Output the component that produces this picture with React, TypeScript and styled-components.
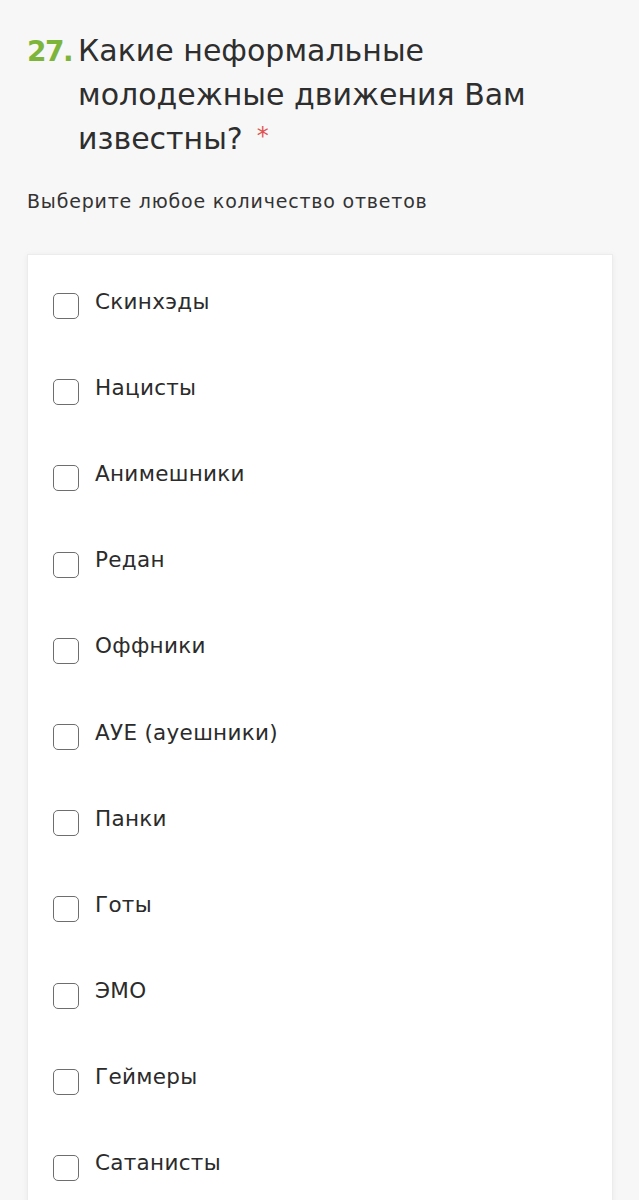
import React from "react";
import styled, { createGlobalStyle } from "styled-components";

const Global = createGlobalStyle`
  html, body { margin: 0; padding: 0; background: #f7f7f7; }
  body { font-family: "DejaVu Sans", "Open Sans", sans-serif; color: #2b2b2b; }
`;

const Page = styled.div`
  padding: 29px 26px 0 27px;
  width: 639px;
  box-sizing: border-box;
  min-height: 1200px;
  overflow: hidden;
`;

const Title = styled.h1`
  display: flex;
  align-items: baseline;
  margin: 0;
  font-weight: 400;
  font-size: 30px;
  line-height: 44px;
  color: #2e2e2e;
`;

const Num = styled.span`
  color: #7db43a;
  font-weight: 700;
  font-size: 28px;
  width: 51px;
  flex: none;
  letter-spacing: -1.5px;
`;

const Text = styled.span`
  max-width: 500px;
`;

const Star = styled.span`
  color: #e0524f;
  font-size: 24px;
  line-height: 1;
  vertical-align: 5px;
  margin-left: 14px;
`;

const Hint = styled.p`
  margin: 29px 0 0;
  font-size: 19px;
  letter-spacing: 0.8px;
  color: #333;
`;

const Card = styled.div`
  margin-top: 42px;
  background: #fff;
  border: 1px solid #ececec;
  box-shadow: 0 1px 6px rgba(0, 0, 0, 0.06);
  padding: 4px 0 0 25px;
`;

const Row = styled.label`
  display: flex;
  align-items: center;
  height: 86.2px;
  gap: 16px;
  font-size: 21.5px;
  letter-spacing: 0.3px;
  color: #2b2b2b;
`;

const Box = styled.span`
  width: 24px;
  height: 24px;
  border: 1.5px solid #6e6e6e;
  border-radius: 5px;
  flex: none;
  margin-top: 8px;
`;

const Label = styled.span`
  margin-top: -2px;
`;

const items = [
  "Скинхэды",
  "Нацисты",
  "Анимешники",
  "Редан",
  "Оффники",
  "АУЕ (ауешники)",
  "Панки",
  "Готы",
  "ЭМО",
  "Геймеры",
  "Сатанисты",
];

export default function App() {
  return (
    <>
      <Global />
      <Page>
        <Title>
          <Num>27.</Num>
          <Text>
            Какие неформальные молодежные движения Вам известны?<Star>*</Star>
          </Text>
        </Title>
        <Hint>Выберите любое количество ответов</Hint>
        <Card>
          {items.map((t) => (
            <Row key={t}>
              <Box />
              <Label>{t}</Label>
            </Row>
          ))}
        </Card>
      </Page>
    </>
  );
}
